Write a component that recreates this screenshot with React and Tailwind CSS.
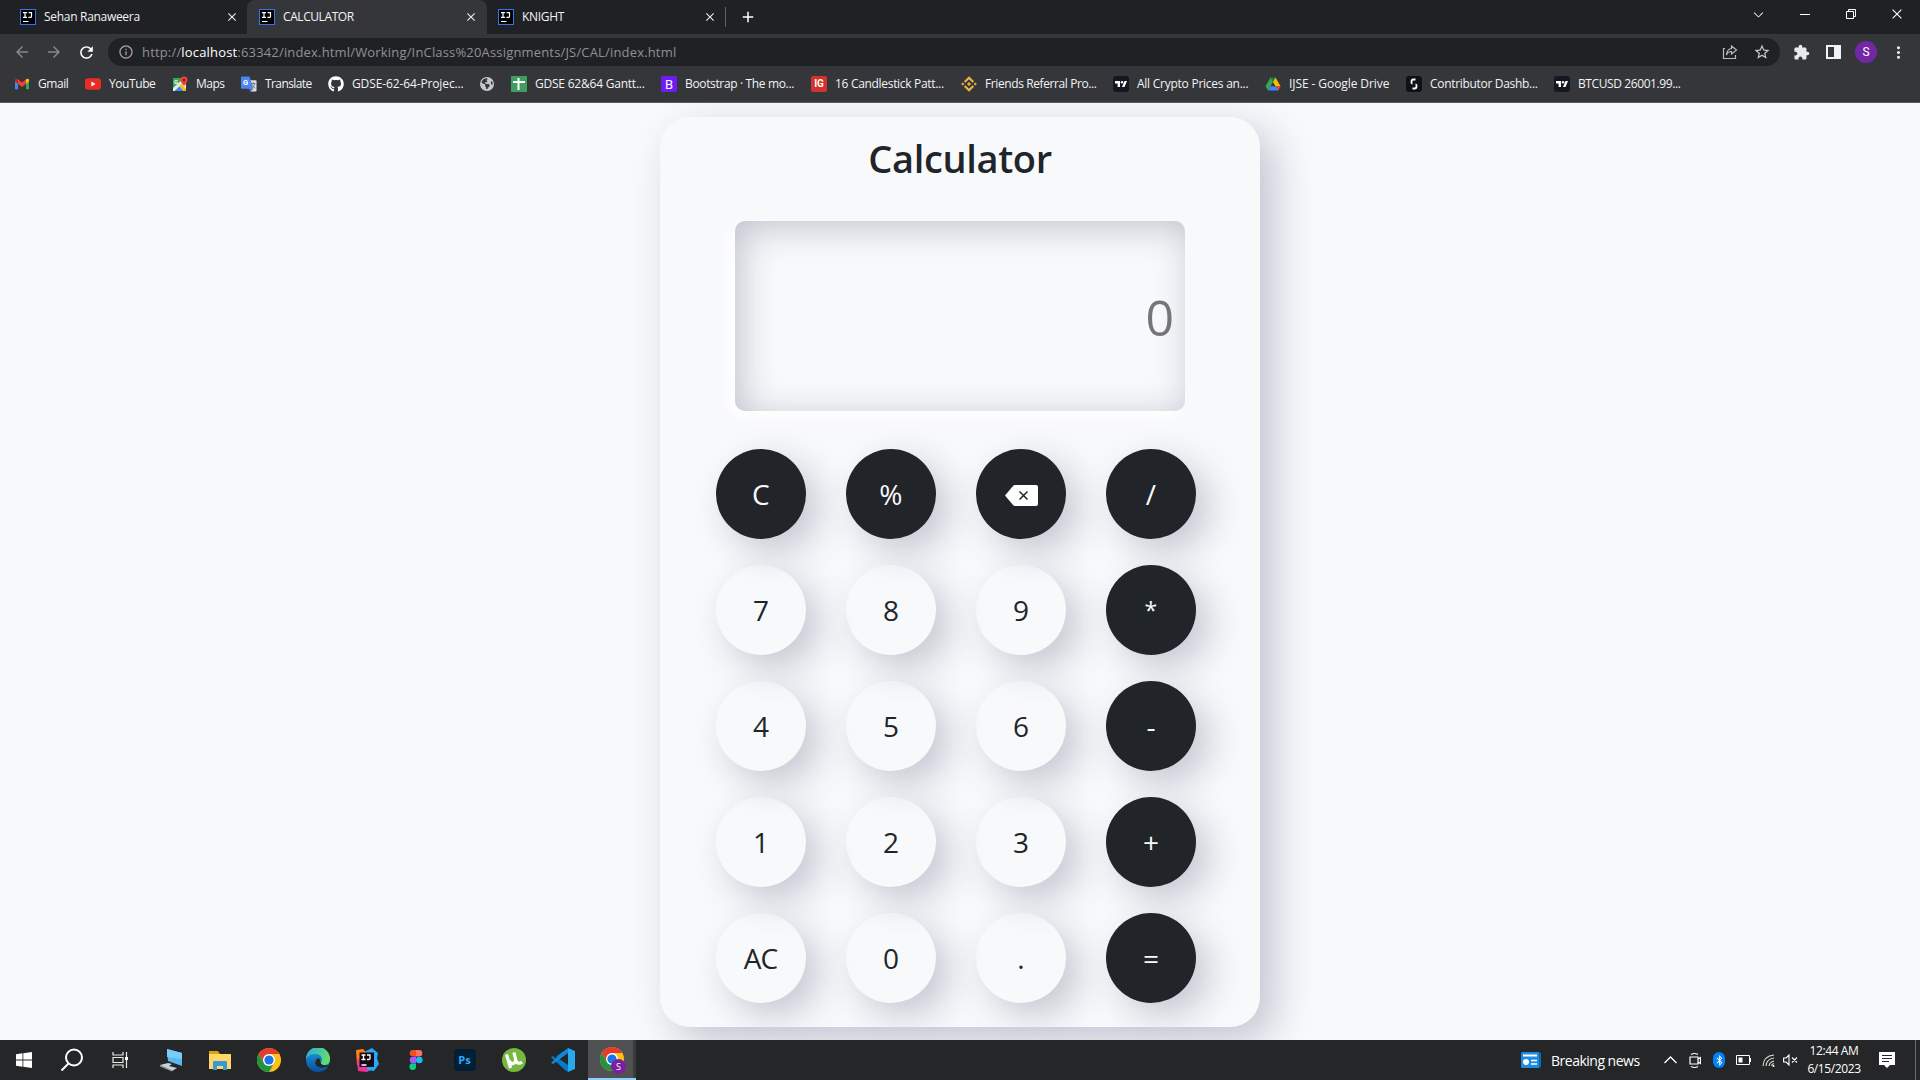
import React from "react";
import { VscChromeClose, VscChevronDown } from "react-icons/vsc";
import { FaGithub, FaBluetoothB } from "react-icons/fa";
import { FaEarthAmericas } from "react-icons/fa6";
import { MdExtension, MdClose, MdAdd, MdArrowBack, MdArrowForward, MdRefresh, MdInfoOutline, MdStarBorder, MdMoreVert } from "react-icons/md";

const font = "font-['Open_Sans','Noto_Sans',sans-serif]";

function IJ({ s = 16 }) {
  return (
    <svg width={s} height={s} viewBox="0 0 16 16" className="shrink-0">
      <rect width="16" height="16" fill="#3574f0" />
      <rect x="1" y="1" width="14" height="14" fill="#000" />
      <path d="M3 3.600h4M5 3.600v4.800M3 8.400h4M8.600 3.600H11.500v3.800q0 1-1.200 1H8.400M3 12.500h5.500" stroke="#fff" strokeWidth="1.200" fill="none" />
    </svg>
  );
}

function Tab({ title, width, tracking, pad, active }) {
  return (
    <div className={`flex h-[34px] shrink-0 items-center ${pad} ${width} ${active ? "rounded-t-[8px] bg-[#35363a]" : ""}`}>
      <IJ />
      <span className={`ml-2 whitespace-nowrap text-[12px] text-[#f1f3f4] ${tracking}`}>{title}</span>
      <MdClose className="ml-auto size-[14px] text-[#e8eaed]" />
    </div>
  );
}

function Gmail() {
  return (
    <svg width="16" height="16" viewBox="0 0 16 16">
      <path d="M1 4v9.300h3V6.500z" fill="#4285f4" /><path d="M15 4v9.300h-3V6.500z" fill="#34a853" />
      <path d="M4 3.300 8 6.400l4-3.100v4.500L8 11 4 7.800z" fill="#ea4335" />
      <path d="M12 3.300v4.500l3-2.300V4c0-1.500-1.700-1.800-3-.7z" fill="#fbbc04" /><path d="M4 3.300v4.500L1 5.500V4c0-1.500 1.700-1.800 3-.7z" fill="#c5221f" />
    </svg>
  );
}
function YouTube() {
  return <svg width="16" height="16" viewBox="0 0 16 16"><rect y="2.300" width="16" height="11.400" rx="3" fill="#ea2d24" /><path d="M6.400 5.600v4.800L10.500 8z" fill="#fff" /></svg>;
}
function Maps() {
  return (
    <svg width="16" height="16" viewBox="0 0 16 16">
      <rect x="1" y="2" width="13" height="13" rx="1" fill="#34a853" /><path d="M1 15 14 3v12z" fill="#e8eaed" /><path d="m2 15 5-5 5 5z" fill="#4285f4" />
      <path d="m1 12 10-9 2 2L2.500 15H1z" fill="#e8eaed" /><path d="m7 10 2-2 5 5v2h-2z" fill="#fbbc04" />
      <text x="2" y="8" fontSize="6" fontWeight="700" fill="#fff" fontFamily="Roboto">G</text>
      <path d="M12 .5a3.500 3.500 0 0 0-3.500 3.500c0 2.500 3.500 6 3.500 6s3.500-3.500 3.500-6A3.500 3.500 0 0 0 12 .5z" fill="#ea4335" /><circle cx="12" cy="4" r="1.200" fill="#811" />
    </svg>
  );
}
function Translate() {
  return (
    <svg width="16" height="16" viewBox="0 0 17 16">
      <path d="M6 4h9.500q1 0 1 1v10q0 1-1 1H10z" fill="#dadce0" /><path d="M1 0h8l4 13H1q-1 0-1-1V1q0-1 1-1z" fill="#4c84f0" /><path d="m8.500 13h4.500l-3 3z" fill="#3367d6" />
      <text x="2" y="9" fontSize="8" fontWeight="700" fill="#fff" fontFamily="Roboto">G</text>
      <path d="M10.500 7.500h5M13 6v1.500M11.500 8c1 2.500 2 3.500 3.500 4.500M14.500 8c-.5 2-1.500 3.500-2.500 4.500" stroke="#777" fill="none" />
    </svg>
  );
}
function Sheets() {
  return <svg width="16" height="16" viewBox="0 0 16 16"><rect width="16" height="16" rx="1" fill="#3f9e5e" /><path d="M7.500 2v12M2 6h12" stroke="#fff" strokeWidth="2" /></svg>;
}
function Letter({ bg, children, size }) {
  return <div className={`flex size-4 items-center justify-center rounded-[2px] font-[Roboto,sans-serif] leading-none text-white ${bg} ${size}`}>{children}</div>;
}
function Binance() {
  return <svg width="16" height="16" viewBox="0 0 16 16" fill="none" stroke="#e9b43f" strokeWidth="2.200"><path d="m3.700 6 4.300-4.300L12.300 6M3.700 10 8 14.300 12.300 10" /><path d="m8 6.200 1.800 1.800L8 9.800 6.200 8zM.5 8l1.300-1.300L3.100 8 1.800 9.300zM12.900 8l1.300-1.300L15.500 8l-1.300 1.300z" fill="#e9b43f" strokeWidth=".5" /></svg>;
}
function TradingView() {
  return <svg width="16" height="16" viewBox="0 0 16 16"><rect width="16" height="16" rx="3" fill="#131722" /><path d="M2 5h5v6H4.600V7.400H2zM11.500 5H14l-2.500 6H9z" fill="#fff" /><circle cx="9" cy="6.200" r="1.200" fill="#fff" /></svg>;
}
function Drive() {
  return <svg width="16" height="16" viewBox="0 0 16 16"><path d="M5.500 1.500h5L8 6z" fill="#188038" /><path d="M5.500 1.500 0.500 10.300l2.500 4.200L8 6z" fill="#34a853" /><path d="M10.500 1.500 8 6l2.500 4.300h5z" fill="#fbbc04" /><path d="M5.400 10.300 3 14.500h10l2.500-4.200z" fill="#4285f4" /><path d="M10.500 10.300h5L13 14.500z" fill="#ea4335" /></svg>;
}
function Contributor() {
  return <svg width="16" height="16" viewBox="0 0 16 16"><rect width="16" height="16" rx="3" fill="#0e1116" /><path d="M9.500 3.500h-2q-2 0-2 2v1q0 1 1 1M6.500 12.500h2q2 0 2-2v-1q0-1-1-1" stroke="#fff" strokeWidth="1.800" fill="none" /></svg>;
}

const bookmarks = [
  { icon: <Gmail />, label: "Gmail", w: "w-[71px]", t: "tracking-[-0.45px]" },
  { icon: <YouTube />, label: "YouTube", w: "w-[87px]", t: "tracking-[-0.42px]" },
  { icon: <Maps />, label: "Maps", w: "w-[69px]", t: "tracking-[-0.5px]" },
  { icon: <Translate />, label: "Translate", w: "w-[87px]", t: "tracking-[-0.6px]" },
  { icon: <FaGithub className="size-4 text-white" />, label: "GDSE-62-64-Projec...", w: "w-[151px]", t: "tracking-[-0.12px]" },
  { icon: <FaEarthAmericas className="size-[14px] text-[#c4c7cb]" />, label: "", w: "w-[32px]", t: "" },
  { icon: <Sheets />, label: "GDSE 62&64 Gantt...", w: "w-[150px]", t: "tracking-[-0.22px]" },
  { icon: <Letter bg="bg-[#6d1df2]" size="text-[13px]">B</Letter>, label: "Bootstrap · The mo...", w: "w-[150px]", t: "tracking-[-0.35px]" },
  { icon: <Letter bg="bg-[#d4322c]" size="text-[10px] font-bold">IG</Letter>, label: "16 Candlestick Patt...", w: "w-[150px]", t: "tracking-[-0.31px]" },
  { icon: <Binance />, label: "Friends Referral Pro...", w: "w-[152px]", t: "tracking-[-0.4px]" },
  { icon: <TradingView />, label: "All Crypto Prices an...", w: "w-[152px]", t: "tracking-[-0.25px]" },
  { icon: <Drive />, label: "IJSE - Google Drive", w: "w-[141px]", t: "tracking-[-0.08px]" },
  { icon: <Contributor />, label: "Contributor Dashb...", w: "w-[148px]", t: "tracking-[-0.31px]" },
  { icon: <TradingView />, label: "BTCUSD 26001.99...", w: "w-[150px]", t: "tracking-[-0.4px]" },
];

function Browser() {
  return (
    <header className="flex h-[103px] flex-col border-b border-[#5b5c5f] bg-[#35363a]">
      <div className="flex h-[34px] bg-[#202124]">
        <div className="flex w-[726px] items-center">
          <div className="w-2" />
          <Tab title="Sehan Ranaweera" width="w-[239px]" tracking="tracking-[-0.3px]" pad="pl-[12px] pr-[8px]" />
          <Tab title="CALCULATOR" width="w-[240px]" tracking="tracking-[-0.42px]" pad="pl-[12px] pr-[9px]" active />
          <Tab title="KNIGHT" width="w-[238px]" tracking="tracking-[-0.3px]" pad="pl-[11px] pr-[8px]" />
          <div className="h-5 w-px shrink-0 bg-[#5f6368]" />
        </div>
        <MdAdd className="ml-[13px] mt-2 size-[18px] text-white" />
        <div className="ml-auto flex h-[28px] items-center text-white">
          <VscChevronDown className="mr-[34px] size-[15px]" />
          <div className="mr-[35px] h-px w-[10px] bg-white" />
          <svg width="12" height="12" viewBox="0 0 12 12" fill="none" stroke="white" className="mr-[33px]"><path d="M1.500 3.500h7v7h-7zM3.500 3.500v-2h7v7h-2" /></svg>
          <VscChromeClose className="mr-[16px] size-[14px]" />
        </div>
      </div>
      <div className="flex h-9 items-center">
        <MdArrowBack className="ml-[13px] size-[18px] text-[#85878a]" />
        <MdArrowForward className="ml-[14px] size-[18px] text-[#85878a]" />
        <MdRefresh className="ml-[14px] size-[19px] text-white" />
        <div className="ml-[12px] flex h-7 w-[1672px] items-center rounded-full bg-[#202124] pl-[10px]">
          <MdInfoOutline className="size-4 text-[#9aa0a6]" />
          <span className="ml-2 mt-px whitespace-nowrap text-[13px] tracking-[0.17px] text-[#8e9297]">http://<span className="text-white">localhost</span>:63342/index.html/Working/InClass%20Assignments/JS/CAL/index.html</span>
          <svg className="ml-auto mr-[15px]" width="16" height="16" viewBox="0 0 16 16" fill="none" stroke="#b8bbbf" strokeWidth="1.200"><path d="M3 4.500H1.500v10h12V11M9.500 2l5 4-5 4V7.500C7 7.500 5.500 8.500 4.500 11c.2-4 2-6 5-6.500z" /></svg>
          <MdStarBorder className="mr-[9px] size-[18px] text-[#c8cacd]" />
        </div>
        <MdExtension className="ml-[13px] size-[17px] text-[#e8eaed]" />
        <svg className="ml-[16px]" width="15" height="14" viewBox="0 0 15 14"><path d="M0 0h15v14H0zM2 2v10h6V2z" fill="#f1f3f4" fillRule="evenodd" /></svg>
        <div className="ml-[14px] flex size-[22px] items-center justify-center rounded-full bg-[#7326a5] font-[Roboto,sans-serif] text-[12px] text-white">S</div>
        <MdMoreVert className="ml-[12px] size-[19px] text-[#e8eaed]" />
      </div>
      <div className="flex h-[28px] items-center pl-[14px]">
        {bookmarks.map((b, i) => (
          <div key={i} className={`flex shrink-0 items-center ${b.w}`}>
            <div className="flex w-4 shrink-0 justify-center">{b.icon}</div>
            <span className={`ml-2 whitespace-nowrap text-[12px] text-[#f1f3f4] ${b.t}`}>{b.label}</span>
          </div>
        ))}
      </div>
    </header>
  );
}

const keys = ["C", "%", "del", "/", "7", "8", "9", "*", "4", "5", "6", "-", "1", "2", "3", "+", "AC", "0", ".", "="];
const darkKeys = new Set(["C", "%", "del", "/", "*", "-", "+", "="]);

function Key({ label }) {
  return (
    <button className={`flex size-[90px] items-center justify-center rounded-full leading-none shadow-[13px_13px_36px_#c3c7d1] ${label === "*" ? "text-[23px]" : "text-[28px]"} ${darkKeys.has(label) ? "bg-[#212529] text-[#f8f9fa]" : "text-[#212529]"}`}>
      {label === "del" ? (
        <svg width="33" height="21" viewBox="0 0 33 21" className="mt-[3px]"><path d="M0 10.500 8 1Q9 0 10 0H31q2 0 2 2V19q0 2-2 2H10Q9 21 8 20z" fill="#fff" /><path d="m14.500 6.500 8 8m0-8-8 8" stroke="#212529" strokeWidth="1.500" /></svg>
      ) : (
        <span className="-ml-px tracking-[-0.8px]">{label}</span>
      )}
    </button>
  );
}

function Calculator() {
  return (
    <main className="flex h-[937px] justify-center overflow-hidden bg-[#f8f9fb] pt-[14px]">
      <section className="flex h-[910px] w-[600px] flex-col items-center rounded-[30px] bg-[#f8f9fb] shadow-[14px_14px_40px_#c1c5d1]">
        <h1 className="mt-[17px] text-[38px] font-semibold leading-[48px] tracking-[-0.35px] text-[#212529]">Calculator</h1>
        <div className="mt-[39px] flex h-[190px] w-[450px] items-center justify-end rounded-[10px] pr-3 text-[50px] text-[#757575] shadow-[inset_6px_6px_36px_#bfc3cd,-6px_6px_16px_#ffffff]"><span className="mt-[2px] tracking-[-1px]">0</span></div>
        <div className="mr-[8px] mt-[38px] grid grid-cols-4 gap-x-10 gap-y-[26px]">
          {keys.map((k) => <Key key={k} label={k} />)}
        </div>
      </section>
    </main>
  );
}

function Chrome() {
  return (
    <svg width="24" height="24" viewBox="0 0 24 24">
      <circle cx="12" cy="12" r="12" fill="#fbc116" /><path d="M12 12 1.600 6A12 12 0 0 1 22.400 6H12z" fill="#e33b2e" />
      <path d="M1.600 6 6.800 15 12 12V6z" fill="#e33b2e" /><path d="M1.600 6A12 12 0 0 0 12 24l5.200-9-5.200 3-5.200-3z" fill="#229342" />
      <circle cx="12" cy="12" r="6" fill="#fff" /><circle cx="12" cy="12" r="4.600" fill="#1a73e8" />
    </svg>
  );
}
function Slot({ children, narrow }) {
  return <div className={`flex h-10 shrink-0 items-center justify-center ${narrow ? "w-12" : "w-[49px]"}`}>{children}</div>;
}

function Taskbar() {
  return (
    <footer className="flex h-10 items-center bg-[#252627] text-white">
      <Slot narrow><svg width="16" height="16" viewBox="0 0 16 16" fill="#fff"><path d="M0 2.200 6.500 1.300V7.600H0zM7.300 1.200 16 0v7.600H7.300zM0 8.400h6.500v6.300L0 13.800zM7.300 8.400H16V16L7.300 14.800z" /></svg></Slot>
      <Slot narrow><svg width="24" height="24" viewBox="0 0 24 24" fill="none" stroke="#fff" strokeWidth="2"><circle cx="14" cy="9.500" r="8" /><path d="m8.500 15.500-7 7" /></svg></Slot>
      <Slot narrow><svg width="17" height="16" viewBox="0 0 17 16" fill="none" stroke="#e8e8e8" strokeWidth="1.200"><path d="M1 0v3h10V0M1 16v-3h10v3M1 5.500h10v5H1zM14.500 0v16" /><path d="M13 5h3v3h-3z" fill="#fff" stroke="none" /></svg></Slot>
      <div className="w-[2px]" />
      <Slot><svg width="24" height="24" viewBox="0 0 24 24"><path d="m8 1 15 4v13L9 13z" fill="#5cb7ef" /><path d="m8 1 15 4v6L8 9z" fill="#79ccf8" /><path d="m1 17 8-2 4 1-3 2 8 2-5 3z" fill="#ccd3d8" /><path d="m1 17 12 5v1.500L1 18.500z" fill="#8d989f" /></svg></Slot>
      <Slot><svg width="24" height="22" viewBox="0 0 24 22"><path d="M1 2h9l2 3h11v5H1z" fill="#dda10c" /><path d="M1 5h22v15H1z" fill="#ffd668" /><path d="M5 21v-8q0-1 1-1h12q1 0 1 1v8h-4v-4H9v4z" fill="#3c97d9" /></svg></Slot>
      <Slot><Chrome /></Slot>
      <Slot><svg width="24" height="24" viewBox="0 0 24 24"><defs><linearGradient id="eg" x1="0" y1="0" x2="1" y2=".4"><stop stopColor="#2aa8e8" /><stop offset="1" stopColor="#63dd6a" /></linearGradient><linearGradient id="eb" x1="0" y1="0" x2="0" y2="1"><stop stopColor="#1b9de2" /><stop offset="1" stopColor="#0b4f9e" /></linearGradient></defs><circle cx="12" cy="12" r="12" fill="url(#eb)" /><path d="M0 11A12 12 0 0 1 24 11q0 6-6 6-4 0-4-2 2-1 2-4-1-5-7-5-6 0-9 5z" fill="url(#eg)" /><path d="M14 15q-1-1 0-3 0 7 9 5l-.8 1.500Q11 22 9 15q0-3 3-5 3 1 2 5z" fill="#252627" /></svg></Slot>
      <Slot><svg width="24" height="24" viewBox="0 0 24 24"><path d="m1 2 7-1 6 6-4 13-8-3z" fill="#fc801d" /><path d="m2 12 6-4 9 13-5 3-9-1z" fill="#f52f9a" /><path d="M11 3 17 0l6 5-1 5 2 6-5 7-7-1z" fill="#27a7f5" /><rect x="4.500" y="4.500" width="14.500" height="14.500" fill="#150a12" /><path d="M6.500 7h4M8.500 7v4.500M6.500 11.500h4M12 7h3v3.500q0 1-1.500 1H12M6.500 17h5" stroke="#fff" strokeWidth="1.300" fill="none" /></svg></Slot>
      <Slot><svg width="14" height="20" viewBox="0 0 14 20"><path d="M4 0h3v6.600H4A3.300 3.300 0 0 1 4 0z" fill="#f24e1e" /><path d="M7 0h3a3.300 3.300 0 0 1 0 6.600H7z" fill="#ff7262" /><path d="M4 6.700h3v6.600H4a3.300 3.300 0 0 1 0-6.600z" fill="#a259ff" /><circle cx="10.300" cy="10" r="3.300" fill="#1abcfe" /><path d="M4 13.400h3v3.300a3.300 3.300 0 1 1-3-3.300z" fill="#0acf83" /></svg></Slot>
      <Slot><div className="flex size-[22px] items-center justify-center rounded-[4px] bg-[#001e36] text-[11px] font-bold text-[#31a8ff]">Ps</div></Slot>
      <Slot><svg width="24" height="24" viewBox="0 0 24 24"><circle cx="12" cy="12" r="12" fill="#76b83f" /><path d="M4.500 6.500 8.500 20M7 12.500C9 17.500 14 16 13.500 11L12 4.500M13.500 11c1 5 4 5 6.500 3" stroke="#fff" strokeWidth="3.200" fill="none" /></svg></Slot>
      <Slot><svg width="24" height="24" viewBox="0 0 24 24"><path d="M17 0 5.500 11 2 8 0 9.200 14 22 17 24V17L5 8.500z" fill="#0879c7" /><path d="M0 15 2 16 17 5V0L5 10z" fill="#1588d5" /><path d="m17 0 7 3v18l-7 3z" fill="#28a8ef" /></svg></Slot>
      <div className="ml-px flex h-10 w-[45px] items-center justify-center border-b-2 border-[#8fd0f6] bg-[#505152]">
        <div className="relative ml-[3px]"><Chrome /><div className="absolute -bottom-[3px] -right-[2px] flex size-[15px] items-center justify-center rounded-full bg-[#7b1fa2] text-[9px]">S</div></div>
      </div>
      <div className="h-10 w-[3px] border-b-2 border-[#8fd0f6] bg-[#3a3b3c]" />
      <div className="ml-auto flex h-10 items-center">
        <svg width="20" height="16" viewBox="0 0 20 16"><rect x="2" width="18" height="16" rx="2" fill="#1264ad" /><rect width="18" height="16" rx="1.500" fill="#1d8ce0" /><path d="M2 3.500h14" stroke="#fff" strokeWidth="2" /><circle cx="5" cy="10" r="3" fill="#fff" /><path d="M10 8.500h6M10 12h6" stroke="#fff" strokeWidth="1.500" /></svg>
        <span className="ml-[10px] w-[90px] whitespace-nowrap text-[14px] tracking-[-0.5px]">Breaking news</span>
        <svg className="ml-[23px]" width="13" height="8" viewBox="0 0 13 8" fill="none" stroke="#fff" strokeWidth="1.300"><path d="m.5 7 6-6 6 6" /></svg>
        <svg className="ml-3" width="12" height="17" viewBox="0 0 12 17" fill="none" stroke="#fff" strokeWidth="1.200"><path d="M1 5h8v7H1zM9 7l2.500-1.500v6L9 10M2 2.500q3.500-2 7 0M2 14.500q3.500 2 7 0" /></svg>
        <div className="ml-3 flex h-4 w-3 items-center justify-center rounded-full bg-[#0082fc]"><FaBluetoothB className="size-[11px]" /></div>
        <svg className="ml-[11px]" width="15" height="10" viewBox="0 0 15 10" fill="none" stroke="#fff"><path d="M.5.5h13v9H.5zM14.500 3v4" /><path d="M2.500 2.500h4v5h-4z" fill="#fff" stroke="none" /></svg>
        <svg className="ml-[11px]" width="13" height="13" viewBox="0 0 13 13" fill="none" stroke="#ddd" strokeWidth="1.100"><path d="M1 12Q1.500 2 12 1M4 12q.5-7 8-8M7 12q.5-4 5-5M9.500 12q.3-2 2.500-2.500" /><circle cx="11.500" cy="12" r="1" fill="#fff" stroke="none" /></svg>
        <svg className="ml-[8px]" width="15" height="12" viewBox="0 0 15 12" fill="none" stroke="#fff" strokeWidth="1.100"><path d="M.6 4h2.500L6 1v10L3.100 8H.6zM9 3.500l5 5m0-5-5 5" /></svg>
        <div className="ml-[9px] flex w-[54px] flex-col items-center whitespace-nowrap text-[12px] leading-[18px] tracking-[-0.4px]"><span>12:44 AM</span><span>6/15/2023</span></div>
        <svg className="ml-[18px]" width="16" height="16" viewBox="0 0 16 16"><path d="M0 0h16v13h-5l-3 3-3-3H0z" fill="#fff" /><path d="M3 3.500h10M3 6.500h10M3 9.500h7" stroke="#252627" /></svg>
        <div className="ml-5 h-10 w-px bg-[#6c6d6d]" /><div className="w-[4px]" />
      </div>
    </footer>
  );
}

export default function App() {
  return (
    <div className={`flex h-screen w-full flex-col overflow-hidden ${font}`}>
      <Browser />
      <Calculator />
      <Taskbar />
    </div>
  );
}
